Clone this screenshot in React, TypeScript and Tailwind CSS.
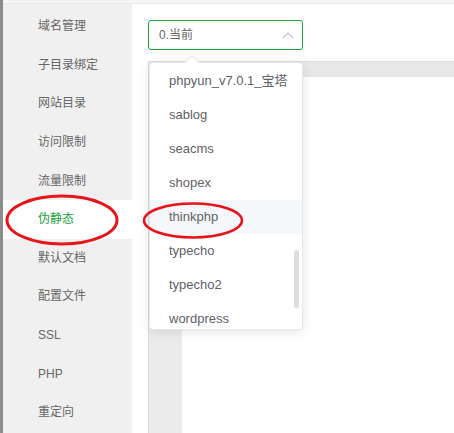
import React from "react";

const menuItems = [
  "域名管理",
  "子目录绑定",
  "网站目录",
  "访问限制",
  "流量限制",
  "伪静态",
  "默认文档",
  "配置文件",
  "SSL",
  "PHP",
  "重定向",
];

const templates = [
  "phpyun_v7.0.1_宝塔",
  "sablog",
  "seacms",
  "shopex",
  "thinkphp",
  "typecho",
  "typecho2",
  "wordpress",
];

const font = {
  fontFamily: '"Liberation Sans", "Noto Sans CJK SC", sans-serif',
};

export default function App() {
  return (
    <div
      className="relative w-[454px] h-[433px] overflow-hidden flex bg-white"
      style={font}
    >
      {/* left edge strip */}
      <div className="w-[3px] h-full bg-[#8c8c8c]" />

      <div className="flex-1 flex flex-col">
        <div className="h-[4px] bg-[#f5f5f5] border-b border-[#e8e8e8]" />

        <div className="flex flex-1">
          {/* side menu */}
          <div className="w-[129px] bg-[#f0f0f0] pt-[3px] flex flex-col">
            {menuItems.map((item) => (
              <div
                key={item}
                className={
                  item === "伪静态"
                    ? "h-[38.6px] shrink-0 flex items-center pl-[35px] text-[12px] bg-white text-[#20a53a]"
                    : "h-[38.6px] shrink-0 flex items-center pl-[35px] text-[12px] text-[#666]"
                }
              >
                {item}
              </div>
            ))}
          </div>

          {/* content */}
          <div className="flex-1 flex flex-col pl-[16px] pt-[16px]">
            <div className="w-[155px] h-[30px] border border-[#20a53a] rounded-[3px] flex items-center justify-between pl-[10px] pr-[8px]">
              <span className="text-[12px] text-[#666]">0.当前</span>
              <svg width="12" height="8" viewBox="0 0 12 8" fill="none">
                <path d="M1 7 L6 2 L11 7" stroke="#c0c4cc" strokeWidth="1.2" />
              </svg>
            </div>

            {/* editor */}
            <div className="mt-[11px] flex-1 border-l border-t border-[#dcdcdc] flex flex-col">
              <div className="h-[15px] bg-[#e8e8e8]" />
              <div className="flex flex-1">
                <div className="w-[33px] bg-[#ebebeb]" />
                <div className="flex-1 bg-white" />
              </div>
            </div>
          </div>
        </div>
      </div>

      {/* dropdown */}
      <div className="absolute left-[149px] top-[62px] w-[154px] h-[268px] bg-white border border-[#e4e7ed] rounded-[4px] shadow-[0_2px_12px_rgba(0,0,0,0.1)]">
        <div className="absolute -top-[6px] left-[37px] w-[10px] h-[10px] bg-white border-l border-t border-[#e4e7ed] rotate-45" />
        <div className="h-full overflow-hidden pt-[1px] rounded-[4px]">
          {templates.map((t) => (
            <div
              key={t}
              className={
                t === "thinkphp"
                  ? "h-[34px] flex items-center pl-[19px] text-[13px] text-[#606266] bg-[#f5f7fa]"
                  : "h-[34px] flex items-center pl-[19px] text-[13px] text-[#606266]"
              }
            >
              {t}
            </div>
          ))}
        </div>
        <div className="absolute left-[144px] top-[187px] w-[5px] h-[58px] rounded-full bg-[#dddddd]" />
      </div>

      {/* red annotation ellipses */}
      <svg
        className="absolute left-0 top-0 pointer-events-none"
        width="454"
        height="433"
        viewBox="0 0 454 433"
      >
        <ellipse cx="62" cy="220" rx="55" ry="24" fill="none" stroke="#e8141b" strokeWidth="3" />
        <ellipse cx="193" cy="220.5" rx="49" ry="17" fill="none" stroke="#e8141b" strokeWidth="2.5" />
      </svg>
    </div>
  );
}
